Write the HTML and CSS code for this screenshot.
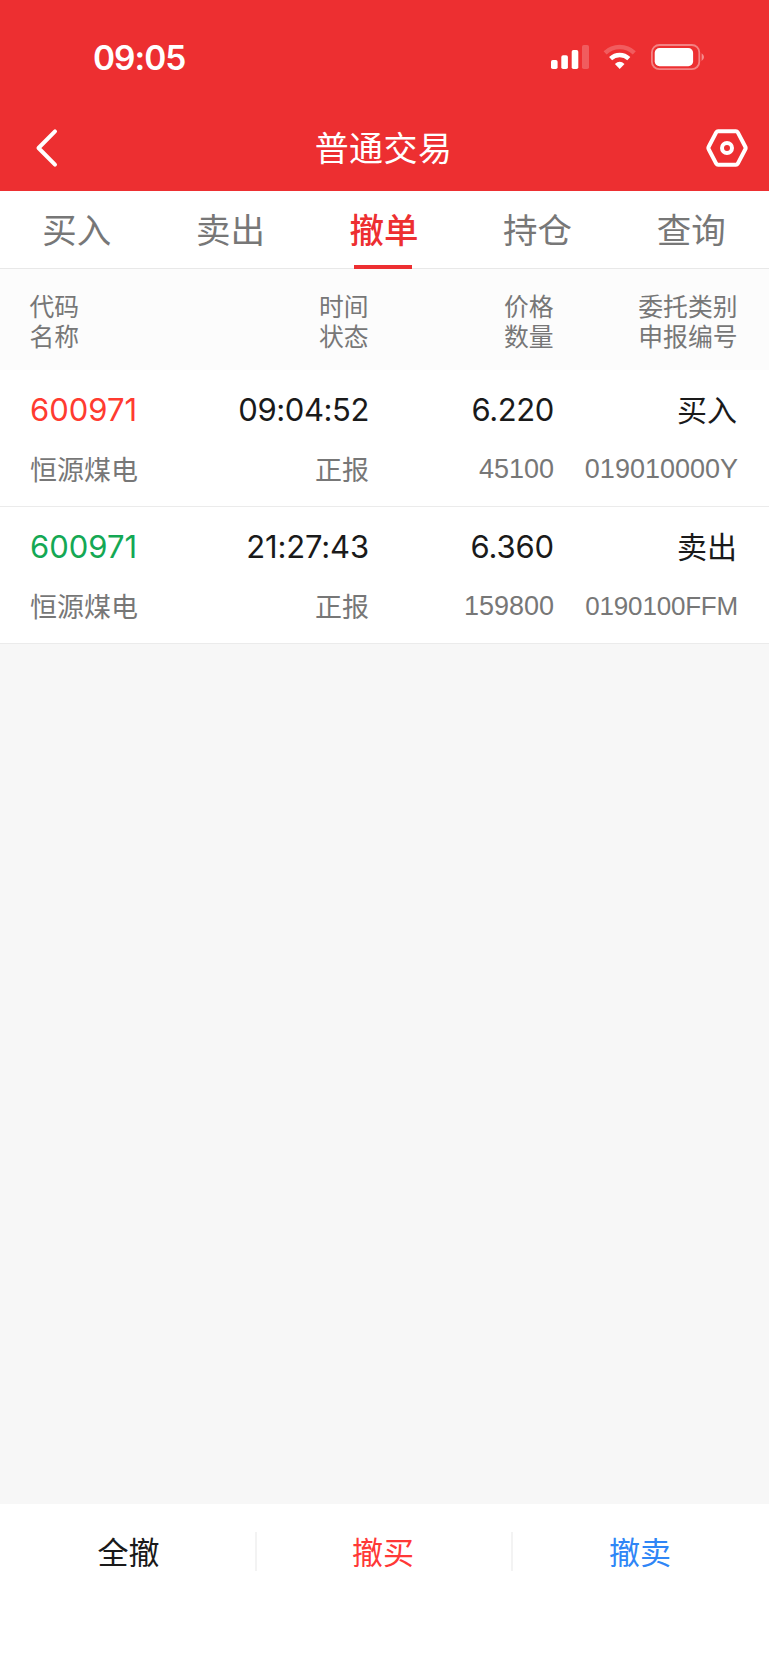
FILE: index.html
```html
<!DOCTYPE html>
<html lang="zh-CN">
<head>
<meta charset="utf-8">
<title>普通交易</title>
<link rel="stylesheet" href="styles.css">
</head>
<body>
<div class="app">
  <header class="header">
    <div class="status">
      <span class="clock">09:05</span>
      <svg class="status-icons" width="156" height="28" viewBox="0 0 156 28" fill="#fff">
        <rect x="1" y="16" width="6.6" height="9" rx="1.8"/>
        <rect x="11.3" y="11.2" width="6.6" height="13.8" rx="1.8"/>
        <rect x="21.7" y="6" width="6.6" height="19" rx="1.8"/>
        <rect x="32" y="1" width="7" height="24" rx="1.8" opacity=".22"/>
        <path d="M55.1 8.9A21 21 0 0 1 84.3 8.9" fill="none" stroke="#fff" stroke-opacity=".22" stroke-width="4.4"/>
        <path d="M60.6 14.7A13.2 13.2 0 0 1 78.8 14.7" fill="none" stroke="#fff" stroke-width="4.4"/>
        <path d="M64.9 20Q69.7 15.4 74.5 20L69.7 25Z"/>
        <rect x="101.9" y="1" width="47.4" height="24.2" rx="7.5" fill="none" stroke="#fff" stroke-opacity=".4" stroke-width="1.8"/>
        <rect x="104.7" y="4" width="38.4" height="18.2" rx="4.8"/>
        <path d="M151.6 9.2Q154 10.6 154 13.1T151.6 17Z" opacity=".45"/>
      </svg>
    </div>
    <div class="nav">
      <svg width="24" height="40" viewBox="0 0 24 40" fill="none" stroke="#fff" stroke-width="4" stroke-linecap="round" stroke-linejoin="round"><path d="M20 3.4L3.5 20L20 36.6"/></svg>
      <h1 class="title">普通交易</h1>
      <svg width="42" height="40" viewBox="0 0 42 40" fill="none" stroke="#fff" stroke-width="4" stroke-linejoin="round"><path d="M12.1 3.2H29.9Q31.1 3.2 31.8 4.4L39.3 18.7Q40 20 39.3 21.3L31.8 35.6Q31.1 36.8 29.9 36.8H12.1Q10.9 36.8 10.2 35.6L2.7 21.3Q2 20 2.7 18.7L10.2 4.4Q10.9 3.2 12.1 3.2Z"/><circle cx="21" cy="20" r="5"/></svg>
    </div>
  </header>
  <nav class="tabs">
    <a class="tab">买入</a>
    <a class="tab">卖出</a>
    <a class="tab active">撤单</a>
    <a class="tab">持仓</a>
    <a class="tab">查询</a>
  </nav>
  <div class="cols head">
    <div>代码<br>名称</div>
    <div>时间<br>状态</div>
    <div>价格<br>数量</div>
    <div>委托类别<br>申报编号</div>
  </div>
  <div class="cols row">
    <div class="main num buy">600971</div>
    <div class="main num tight">09:04:52</div>
    <div class="main num tight">6.220</div>
    <div class="main">买入</div>
    <div class="sub">恒源煤电</div>
    <div class="sub">正报</div>
    <div class="sub qty">45100</div>
    <div class="sub qty">019010000Y</div>
  </div>
  <div class="cols row">
    <div class="main num sell">600971</div>
    <div class="main num snug">21:27:43</div>
    <div class="main num snug">6.360</div>
    <div class="main">卖出</div>
    <div class="sub">恒源煤电</div>
    <div class="sub">正报</div>
    <div class="sub qty">159800</div>
    <div class="sub qty small">0190100FFM</div>
  </div>
  <footer class="actions">
    <a class="action">全撤</a>
    <a class="action red">撤买</a>
    <a class="action blue">撤卖</a>
  </footer>
</div>
</body>
</html>
```
FILE: styles.css
```css
* { box-sizing: border-box; }
body {
  margin: 0;
  background: #f7f7f7;
  font-family: "Noto Sans CJK SC", sans-serif;
  color: #1a1a1a;
}
.app { display: flex; flex-direction: column; height: 1665px; }
.header { height: 191px; background: #ed2f31; color: #fff; }
.status {
  display: flex;
  justify-content: space-between;
  align-items: flex-start;
  height: 106px;
  padding: 38px 63px 0 93px;
}
.clock { font: 600 33.5px/40px Inter, sans-serif; letter-spacing: -1px; }
.status-icons { margin-top: 6px; }
.nav {
  display: flex;
  justify-content: space-between;
  align-items: center;
  height: 84px;
  padding: 0 21px 0 35px;
}
.title {
  margin: 0;
  padding: 0 0 3px 2px;
  font-size: 34px;
  font-weight: 400;
  line-height: 40px;
  letter-spacing: .4px;
}
.tabs {
  display: grid;
  grid-template-columns: repeat(5, 1fr);
  height: 78px;
  padding-right: 1px;
  background: #fff;
  border-bottom: 1px solid #e8e8e8;
}
.tab {
  position: relative;
  text-align: center;
  font-size: 34.5px;
  line-height: 74px;
  color: #777;
}
.active { color: #ed2f31; font-weight: 500; }
.active::after {
  content: "";
  position: absolute;
  left: 47px;
  bottom: -1px;
  width: 58px;
  height: 4px;
  background: #ed2f31;
}
.cols {
  display: grid;
  grid-template-columns: 160px 179px 185px 184px;
  padding: 0 31px 0 30px;
  text-align: right;
  white-space: nowrap;
}
.cols > :nth-child(4n + 1) { text-align: left; }
.head {
  height: 101px;
  padding: 21px 31.5px 0 29.5px;
  background: #fcfcfc;
  color: #777;
  font-size: 24.8px;
  line-height: 30px;
}
.row {
  grid-template-rows: 40px 40px;
  row-gap: 19px;
  height: 137px;
  padding-top: 20px;
  background: #fff;
  border-bottom: 1px solid #ebebeb;
}
.main { font-size: 30px; line-height: 36px; padding-right: 1px; }
.num { font-family: Inter, sans-serif; font-size: 31px; line-height: 40px; padding-right: 0; }
.tight { letter-spacing: -.4px; }
.snug { letter-spacing: -.15px; }
.buy { color: #ff3b30; }
.sell { color: #14a854; }
.sub { font-size: 27px; line-height: 39px; color: #777; }
.qty { font-family: "Liberation Sans", sans-serif; line-height: 41px; }
.small { font-size: 26px; letter-spacing: -.2px; }
.actions {
  display: grid;
  grid-template-columns: 255px 256px 1fr;
  height: 161px;
  margin-top: auto;
  padding-top: 28px;
  background: #fff;
}
.action {
  height: 39px;
  padding-left: 2px;
  text-align: center;
  font-size: 31px;
  line-height: 38px;
}
.action + .action { padding: 0 2px 0 0; border-left: 2px solid #f3f3f3; }
.red { color: #ff3837; }
.blue { color: #2f86f6; }
```
